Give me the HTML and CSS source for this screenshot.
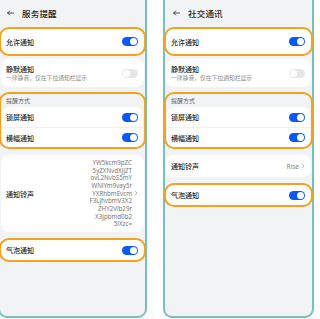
FILE: index.html
```html
<!DOCTYPE html>
<html lang="zh-CN">
<head>
<meta charset="UTF-8">
<meta name="viewport" content="width=device-width, initial-scale=1.0">
<title>通知设置</title>
<link rel="stylesheet" href="styles.css">
</head>
<body>
    <div class="screens">
        <!-- 服务提醒 -->
        <section class="phone phone-left">
            <header class="bar">
                <svg class="back" viewBox="0 0 8 6"><path d="M7.5 3H0.8M3 0.7L0.8 3L3 5.3" fill="none" stroke="#222" stroke-width="0.9" stroke-linecap="round" stroke-linejoin="round"/></svg>
                <span class="bar-title">服务提醒</span>
            </header>
            <div class="card row allow hl">
                <span class="title">允许通知</span>
                <span class="switch on"></span>
            </div>
            <div class="card row silent">
                <div>
                    <div class="title">静默通知</div>
                    <div class="sub">一律静音，仅在下拉通知栏显示</div>
                </div>
                <span class="switch off"></span>
            </div>
            <div class="group hl">
                <div class="group-label">提醒方式</div>
                <div class="card">
                    <div class="row inner"><span class="title">锁屏通知</span><span class="switch on"></span></div>
                    <div class="row inner"><span class="title">横幅通知</span><span class="switch on"></span></div>
                </div>
            </div>
            <div class="card row ring ring-long">
                <span class="title">通知铃声</span>
                <span class="value">
                    <span class="code">YW5kcm9pZC<br>5yZXNvdXJjZT<br>ovL2NvbS5mY<br>WNlYm9vay5r<br>YXRhbmEvcm<br>F3LjhvbmV3X2<br>ZHY2Vlb29r<br>X3Jpbmd0b2<br>5lXzc=</span>
                    <svg class="chev" viewBox="0 0 4 7"><path d="M0.7 0.7L3.2 3.5L0.7 6.3" fill="none" stroke="#999" stroke-width="0.8"/></svg>
                </span>
            </div>
            <div class="card row bubble hl">
                <span class="title">气泡通知</span>
                <span class="switch on"></span>
            </div>
        </section>

        <!-- 社交通讯 -->
        <section class="phone phone-right">
            <header class="bar">
                <svg class="back" viewBox="0 0 8 6"><path d="M7.5 3H0.8M3 0.7L0.8 3L3 5.3" fill="none" stroke="#222" stroke-width="0.9" stroke-linecap="round" stroke-linejoin="round"/></svg>
                <span class="bar-title">社交通讯</span>
            </header>
            <div class="card row allow hl">
                <span class="title">允许通知</span>
                <span class="switch on"></span>
            </div>
            <div class="card row silent">
                <div>
                    <div class="title">静默通知</div>
                    <div class="sub">一律静音，仅在下拉通知栏显示</div>
                </div>
                <span class="switch off"></span>
            </div>
            <div class="group hl">
                <div class="group-label">提醒方式</div>
                <div class="card">
                    <div class="row inner"><span class="title">锁屏通知</span><span class="switch on"></span></div>
                    <div class="row inner"><span class="title">横幅通知</span><span class="switch on"></span></div>
                </div>
            </div>
            <div class="card row ring">
                <span class="title">通知铃声</span>
                <span class="value">
                    <span class="rise">Rise</span>
                    <svg class="chev" viewBox="0 0 4 7"><path d="M0.7 0.7L3.2 3.5L0.7 6.3" fill="none" stroke="#999" stroke-width="0.8"/></svg>
                </span>
            </div>
            <div class="card row bubble hl">
                <span class="title">气泡通知</span>
                <span class="switch on"></span>
            </div>
        </section>
    </div>
</body>
</html>
```

FILE: styles.css
```css
body {
    margin: 0;
    padding: 0;
    background-color: #fff;
    font-family: "Noto Sans CJK SC", "Noto Sans", sans-serif;
    color: #1f1f1f;
    overflow: hidden;
}
.screens {
    display: flex;
    gap: 16px;
}
.phone {
    box-sizing: border-box;
    height: 328px;
    margin-top: -10px;
    padding: 10px 1px 0;
    background-color: #f1f3f5;
    border: 2px solid #74c1bd;
    border-radius: 0 0 9px 9px;
    display: flex;
    flex-direction: column;
}
.phone-left {
    width: 149px;
    margin-left: -2px;
}
.phone-right {
    width: 151px;
}
.bar {
    height: 20px;
    padding-top: 2px;
    box-sizing: border-box;
    display: flex;
    align-items: center;
    padding-left: 7px;
}
.phone-left .bar {
    padding-left: 6px;
}
.back {
    width: 7px;
    height: 6px;
    margin-right: 8px;
}
.bar-title {
    font-size: 8.5px;
    font-weight: 500;
    letter-spacing: 0.2px;
}
.card {
    background-color: #fff;
    border-radius: 8px;
}
.row {
    display: flex;
    align-items: center;
    justify-content: space-between;
    padding: 0 6px 0 5px;
}
.hl {
    outline: 2px solid #f5a21c;
    outline-offset: 0;
}
.title {
    font-size: 7px;
    font-weight: 500;
    line-height: 10px;
}
.sub {
    font-size: 5.8px;
    color: #8a8a8a;
    line-height: 8px;
}
.allow {
    margin-top: 7px;
    height: 25px;
}
.silent {
    margin-top: 5px;
    height: 28px;
}
.group {
    margin-top: 7px;
    padding: 0 1px;
    border-radius: 8px;
}
.group-label {
    height: 13px;
    line-height: 13px;
    padding-left: 4px;
    font-size: 6px;
    color: #666;
}
.inner {
    height: 20px;
    padding: 0 5px 0 4px;
}
.inner + .inner {
    height: 19px;
    border-top: 1px solid #f0f0f0;
}
.ring {
    margin-top: 8px;
    height: 22px;
}
.ring-long {
    height: 77px;
}
.value {
    display: flex;
    align-items: center;
    gap: 2px;
}
.code {
    font-family: "Noto Sans", sans-serif;
    font-size: 6.2px;
    line-height: 7.7px;
    color: #777;
    text-align: right;
}
.rise {
    font-family: "Noto Sans", sans-serif;
    font-size: 6.5px;
    color: #888;
}
.chev {
    width: 4px;
    height: 6px;
}
.bubble {
    margin-top: 8px;
    height: 20px;
}
.switch {
    position: relative;
    width: 16px;
    height: 9px;
    border-radius: 5px;
    flex-shrink: 0;
}
.switch::after {
    content: "";
    position: absolute;
    top: 1px;
    width: 7px;
    height: 7px;
    border-radius: 50%;
    background-color: #fff;
}
.switch.on {
    background-color: #0a59f7;
}
.switch.on::after {
    right: 1px;
}
.switch.off {
    background-color: #e4e6e8;
}
.switch.off::after {
    left: 1px;
}
```
